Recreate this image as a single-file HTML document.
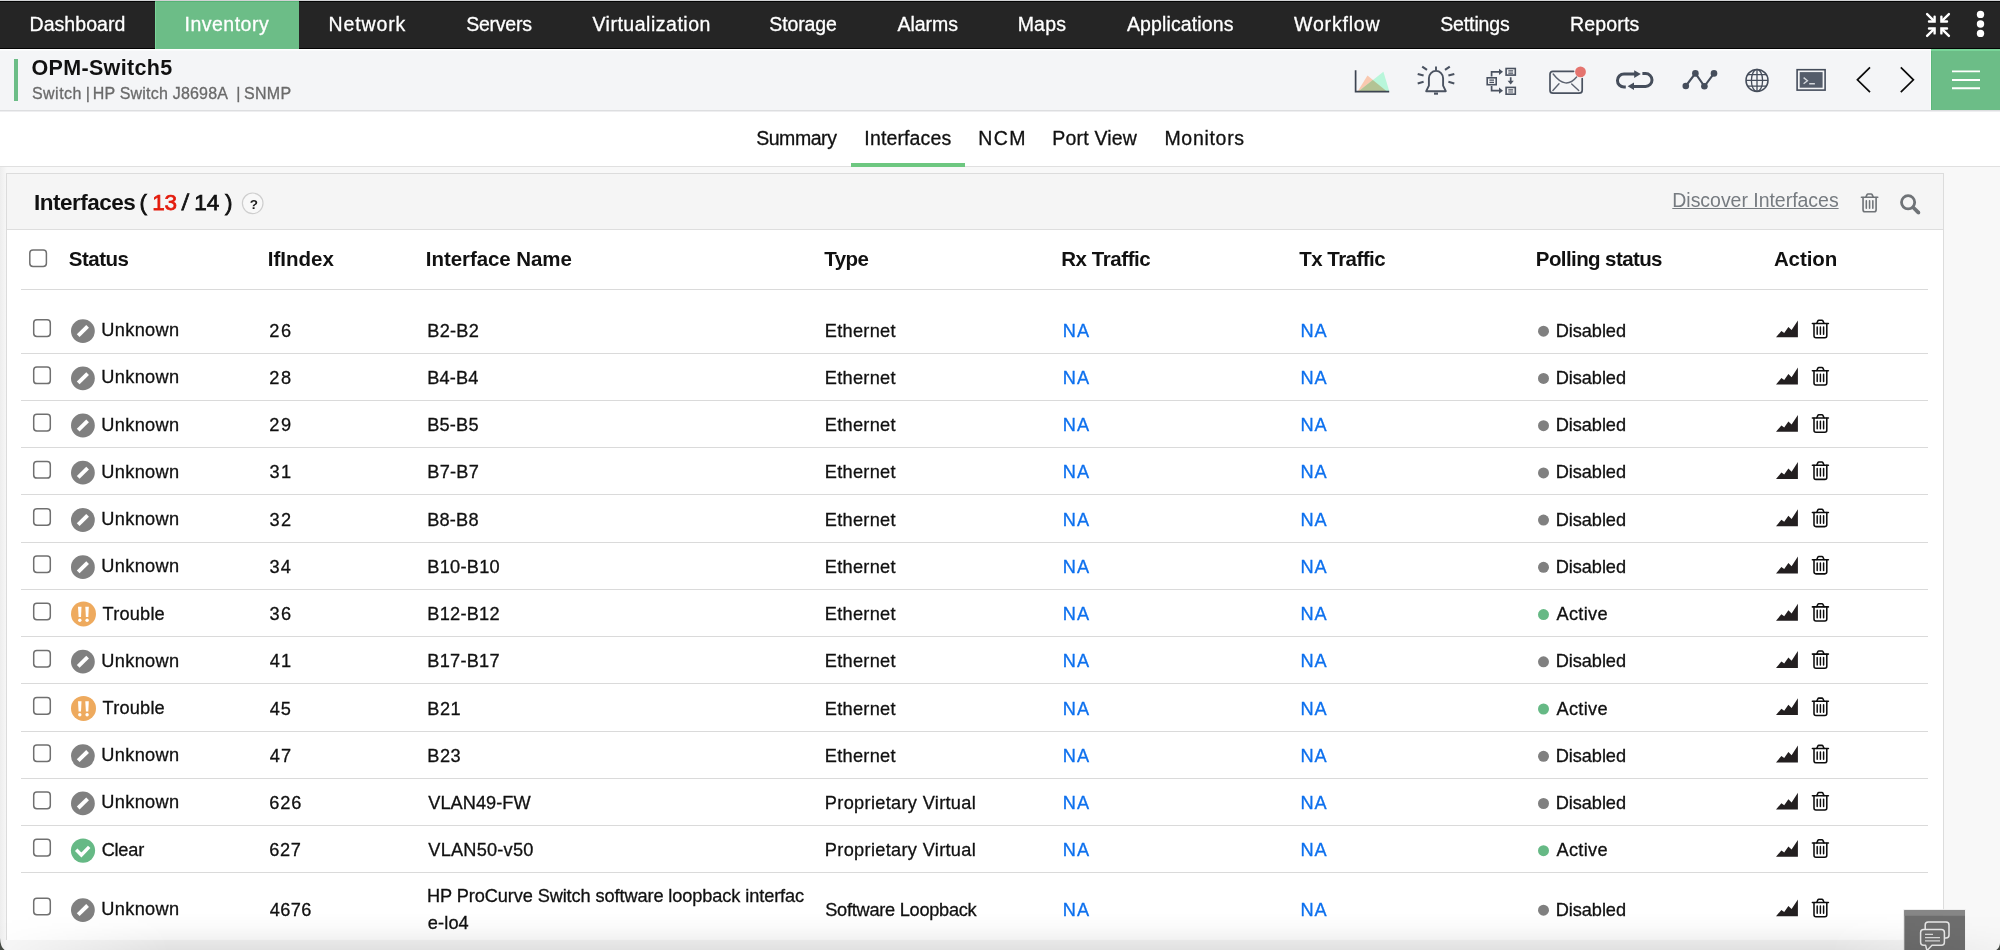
<!DOCTYPE html>
<html lang="en"><head><meta charset="utf-8"><title>OPM-Switch5 - Interfaces</title>
<style>
html,body{margin:0;padding:0}
body{width:2000px;height:950px;overflow:hidden;position:relative;background:#f8f8f8;font-family:"Liberation Sans", sans-serif;color:#111}
.a{position:absolute}
.t{position:absolute;white-space:pre;line-height:1}
.cb{position:absolute;width:15px;height:15px;border:1.5px solid #6f6f6f;border-radius:3.5px;background:#fff}
.sep{position:absolute;left:21px;width:1907px;height:1px;background:#dadada}
svg{position:absolute;overflow:visible}
</style></head><body>
<div class="a" style="left:0;top:0;width:2000px;height:49px;background:#252525"></div>
<div class="a" style="left:0;top:0;width:2000px;height:1px;background:#d2d3d5"></div>
<div class="a" style="left:0;top:1px;width:2000px;height:1px;background:#050505"></div>
<div class="a" style="left:0;top:48px;width:2000px;height:1px;background:#030303"></div>
<div class="a" style="left:155px;top:1px;width:144px;height:48px;background:#6cbd87"></div>
<div class="a" style="left:155px;top:1px;width:144px;height:1px;background:#56b376"></div>
<div class="a" style="left:155px;top:2px;width:1px;height:47px;background:#79d599"></div>
<div class="a" style="left:0;top:49px;width:2000px;height:61px;background:#f4f5f7"></div>
<div class="a" style="left:0;top:49px;width:1931px;height:1px;background:#fff"></div>
<div class="a" style="left:0;top:50px;width:1931px;height:1px;background:#f9fafb"></div>
<div class="a" style="left:0;top:110px;width:2000px;height:1px;background:#dddee0"></div>
<div class="a" style="left:0;top:111px;width:2000px;height:1px;background:#eeeef0"></div>
<div class="a" style="left:14px;top:59px;width:4px;height:42px;background:#6cbd87"></div>
<div class="a" style="left:1930px;top:49px;width:1px;height:61px;background:#fbfbfc"></div>
<div class="a" style="left:1931px;top:49px;width:69px;height:61px;background:#6cbd87"></div>
<div class="a" style="left:1931px;top:49px;width:69px;height:2px;background:#79d599"></div>
<div class="a" style="left:1931px;top:51px;width:1px;height:59px;background:#5cb77b"></div>
<div class="a" style="left:0;top:112px;width:2000px;height:54px;background:#fff"></div>
<div class="a" style="left:0;top:166px;width:2000px;height:1px;background:#e0e0e0"></div>
<div class="a" style="left:851px;top:163px;width:114px;height:4px;background:#6dc780"></div>
<div class="a" style="left:0;top:167px;width:7px;height:783px;background:linear-gradient(90deg,#ededed,#f8f8f8)"></div>
<div class="a" style="left:6px;top:173px;width:1936px;height:766px;background:#fff;border:1px solid #dcdcdc;border-bottom:none"></div>
<div class="a" style="left:7px;top:174px;width:1936px;height:55px;background:#f5f5f5"></div>
<div class="a" style="left:7px;top:229px;width:1936px;height:1px;background:#dedede"></div>
<div class="sep" style="top:289px"></div>
<div class="sep" style="top:353px"></div>
<div class="sep" style="top:400px"></div>
<div class="sep" style="top:447px"></div>
<div class="sep" style="top:494px"></div>
<div class="sep" style="top:542px"></div>
<div class="sep" style="top:589px"></div>
<div class="sep" style="top:636px"></div>
<div class="sep" style="top:683px"></div>
<div class="sep" style="top:731px"></div>
<div class="sep" style="top:778px"></div>
<div class="sep" style="top:825px"></div>
<div class="sep" style="top:872px"></div>
<svg style="left:0;top:0" width="2000" height="950" viewBox="0 0 2000 950"><g fill="#fff" stroke="#707070" stroke-width="1.5"><rect x="29.8" y="249.9" width="16.6" height="16.6" rx="3.2"/><rect x="33.7" y="319.8" width="16.6" height="16.6" rx="3.2"/><rect x="33.7" y="367.0" width="16.6" height="16.6" rx="3.2"/><rect x="33.7" y="414.3" width="16.6" height="16.6" rx="3.2"/><rect x="33.7" y="461.5" width="16.6" height="16.6" rx="3.2"/><rect x="33.7" y="508.7" width="16.6" height="16.6" rx="3.2"/><rect x="33.7" y="555.9" width="16.6" height="16.6" rx="3.2"/><rect x="33.7" y="603.2" width="16.6" height="16.6" rx="3.2"/><rect x="33.7" y="650.4" width="16.6" height="16.6" rx="3.2"/><rect x="33.7" y="697.6" width="16.6" height="16.6" rx="3.2"/><rect x="33.7" y="744.9" width="16.6" height="16.6" rx="3.2"/><rect x="33.7" y="792.1" width="16.6" height="16.6" rx="3.2"/><rect x="33.7" y="839.3" width="16.6" height="16.6" rx="3.2"/><rect x="33.7" y="898.2" width="16.6" height="16.6" rx="3.2"/></g></svg>
<svg style="left:0;top:0" width="2000" height="950" viewBox="0 0 2000 950" ><g stroke="#fff" stroke-width="2.4" fill="none" stroke-linecap="butt" stroke-linejoin="miter"><path d="M1927.1 14.1L1934.0 20.9" stroke-linecap="round"/><path d="M1929.0 21.5H1934.6V16.6" stroke-linecap="round"/><path d="M1948.9 14.1L1942.0 20.9" stroke-linecap="round"/><path d="M1947.0 21.5H1941.4V16.6" stroke-linecap="round"/><path d="M1927.1 35.9L1934.0 29.1" stroke-linecap="round"/><path d="M1929.0 28.5H1934.6V33.4" stroke-linecap="round"/><path d="M1948.9 35.9L1942.0 29.1" stroke-linecap="round"/><path d="M1947.0 28.5H1941.4V33.4" stroke-linecap="round"/></g><circle cx="1980.5" cy="14.4" r="3.7" fill="#fff"/><circle cx="1980.5" cy="24.0" r="3.7" fill="#fff"/><circle cx="1980.5" cy="33.4" r="3.7" fill="#fff"/><polygon points="1357.9,91 1367.5,75.5 1386.4,91" fill="#f9c9b0"/><polygon points="1359,91 1383.4,71.7 1389.2,91" fill="#b8f6da"/><polygon points="1359,91 1372.8,80 1386.4,91" fill="#b3c394"/><path d="M1355.6 70.2V91.6H1389.2" fill="none" stroke="#3c4451" stroke-width="1.7"/><g fill="none" stroke="#4a5260" stroke-width="1.9" stroke-linecap="butt" stroke-linejoin="round"><path d="M1436 66.6V70.4"/><path d="M1426.2 91.2L1428.9 85.6V78.2A7.1 7.3 0 0 1 1443.1 78.2V85.6L1445.8 91.2Z"/><path d="M1434 93.6H1438" stroke-width="2.2"/><path d="M1422.2 66.6L1427.0 69.9M1417.7 74L1423.6 75.6M1417.7 83.4L1423.6 81.8" stroke-width="2.1"/><path d="M1449.8 66.6L1445.0 69.9M1454.3 74L1448.4 75.6M1454.3 83.4L1448.4 81.8" stroke-width="2.1"/></g><g fill="none" stroke="#4a5260" stroke-width="1.6"><rect x="1487.2" y="77.8" width="9.0" height="6.9"/><path d="M1489.4 80.2H1494.0M1489.4 82.4H1494.0" stroke-width="1.2"/><rect x="1506.1" y="68.5" width="9.2" height="6.6"/><path d="M1508.3 70.9H1513.1M1508.3 73.1H1513.1" stroke-width="1.2"/><rect x="1506.1" y="87.4" width="9.2" height="6.8"/><path d="M1508.3 89.8H1513.1M1508.3 92.0H1513.1" stroke-width="1.2"/><path d="M1491.6 76.6V71.8H1499.6M1491.6 86V90.7H1499.6M1510.7 77.2V81.4" stroke-width="1.7"/></g><polygon points="1499,68.7 1503,71.8 1499,74.9" fill="#4a5260"/><polygon points="1499,87.6 1503,90.7 1499,93.8" fill="#4a5260"/><polygon points="1507.6,80.8 1513.8,80.8 1510.7,84.4" fill="#4a5260"/><g fill="none" stroke="#4a5260" stroke-width="1.7" stroke-linecap="round"><path d="M1573.6 71.3H1553Q1550 71.3 1550 74.3V90.2Q1550 93.2 1553 93.2H1579Q1582.2 93.2 1582.2 90.2V78.6"/><path d="M1553.2 74Q1565.6 90.2 1576.6 77" stroke-width="1.4" opacity=".9"/><path d="M1552.9 90.4L1559 83.8M1571.7 84L1578.7 90.6" stroke-width="1.4" opacity=".9"/></g><circle cx="1580.5" cy="71.9" r="5.4" fill="#e5746f"/><g fill="none" stroke="#454d5b" stroke-width="3"><path d="M1625.8 87.1H1624A6.55 6.55 0 0 1 1624 74H1635"/><path d="M1642.4 73.6H1645.6A6.4 6.4 0 0 1 1645.6 86.4H1633.4"/></g><polygon points="1634.2,70.2 1640.8,74.1 1634.2,78" fill="#454d5b"/><polygon points="1634,82.6 1627.6,86.3 1634,90" fill="#454d5b"/><path d="M1685.8 86L1695.4 73.4L1704.4 86.3L1714 73.4" fill="none" stroke="#454d5b" stroke-width="2.1"/><circle cx="1685.8" cy="86.0" r="3.3" fill="#454d5b"/><circle cx="1695.4" cy="73.4" r="3.3" fill="#454d5b"/><circle cx="1704.4" cy="86.3" r="3.3" fill="#454d5b"/><circle cx="1714.0" cy="73.4" r="3.3" fill="#454d5b"/><g fill="none" stroke="#454d5b" stroke-width="1.5"><circle cx="1757" cy="80.4" r="11"/><ellipse cx="1757" cy="80.4" rx="5.6" ry="11" stroke-width="1.3"/><path d="M1757 69.4V91.4M1746 80.4H1768M1748 74.6H1766M1748 86.2H1766" stroke-width="1.3"/></g><rect x="1797.1" y="69.7" width="28" height="20.4" fill="none" stroke="#454d5b" stroke-width="1.6"/><rect x="1799.7" y="72.1" width="22.9" height="15.6" fill="#545c6a"/><path d="M1803.6 77.6L1807.4 80.7L1803.6 83.7M1809.2 83.7H1814.9" fill="none" stroke="#d3d6db" stroke-width="1.4"/><path d="M1870 67.4L1857.4 79.8L1870 92.2M1900.8 67.4L1913.4 79.8L1900.8 92.2" fill="none" stroke="#0a0a0a" stroke-width="1.7"/><path d="M1952 71.4H1980M1952 80H1980M1952 88.3H1980" fill="none" stroke="#fff" stroke-width="1.9"/><circle cx="252.7" cy="203.3" r="10.3" fill="#f8f8f8" stroke="#cecece" stroke-width="1.2"/><g transform="translate(1860.60 193.20) scale(1.020)" fill="none" stroke="#6f7377" stroke-width="1.60" stroke-linecap="round" stroke-linejoin="round"><path d="M0.8 4H16.8"/><path d="M5.2 3.8L6.3 1.4Q6.6 0.8 7.3 0.8H10.3Q11 0.8 11.3 1.4L12.4 3.8"/><path d="M2.4 4.2V16.2Q2.4 18.2 4.4 18.2H13.2Q15.2 18.2 15.2 16.2V4.2"/><path d="M5.6 7.4V14.8M8.8 7.4V14.8M12 7.4V14.8" stroke-width="1.52"/></g><circle cx="1908.1" cy="202.3" r="6.6" fill="none" stroke="#6f7377" stroke-width="2.8"/><path d="M1913 207.2L1918.7 212.9" fill="none" stroke="#6f7377" stroke-width="3.7" stroke-linecap="butt"/><circle cx="1918.6" cy="212.8" r="1.7" fill="#6f7377"/><rect x="1903.8" y="909.7" width="61.7" height="42" fill="#6e6e6e" stroke="#f4f4f4" stroke-width="1"/><rect x="1904.3" y="910.2" width="60.7" height="5.6" fill="#868686"/><g fill="none" stroke="#e9e9e9" stroke-width="1.5" stroke-linejoin="round"><path d="M1925.2 929V925Q1925.2 922 1928.2 922H1946Q1949 922 1949 925V935Q1949 938 1946 938H1945"/><path d="M1923.6 929.6H1941.4Q1944.4 929.6 1944.4 932.6V942.2Q1944.4 945.2 1941.4 945.2H1932L1927 950.6L1925.6 945.2H1923.6Q1920.6 945.2 1920.6 942.2V932.6Q1920.6 929.6 1923.6 929.6Z" fill="#6e6e6e"/><path d="M1925 934.4H1933M1925 937.6H1940M1925 940.8H1940" stroke-width="1.3" stroke="#dcdcdc"/></g></svg>
<svg style="left:0;top:0" width="2000" height="950" viewBox="0 0 2000 950" ><circle cx="82.9" cy="331.1" r="11.9" fill="#808080"/><path d="M78.2 335.7L87.6 326.4" stroke="#fff" stroke-width="3.9" stroke-linecap="butt" fill="none"/><circle cx="1543.5" cy="331.2" r="5.5" fill="#808080"/><polygon points="1776,337.3 1781.4,330.9 1784.2,332.9 1788.4,326.9 1791.6,330.1 1797.9,320.4 1797.9,337.3" fill="#231f20"/><g transform="translate(1811.60 319.50) scale(1.000)" fill="none" stroke="#0d0d0d" stroke-width="1.55" stroke-linecap="round" stroke-linejoin="round"><path d="M0.8 4H16.8"/><path d="M5.2 3.8L6.3 1.4Q6.6 0.8 7.3 0.8H10.3Q11 0.8 11.3 1.4L12.4 3.8"/><path d="M2.4 4.2V16.2Q2.4 18.2 4.4 18.2H13.2Q15.2 18.2 15.2 16.2V4.2"/><path d="M5.6 7.4V14.8M8.8 7.4V14.8M12 7.4V14.8" stroke-width="1.47"/></g></svg>
<svg style="left:0;top:0" width="2000" height="950" viewBox="0 0 2000 950" ><circle cx="82.9" cy="378.3" r="11.9" fill="#808080"/><path d="M78.2 382.9L87.6 373.7" stroke="#fff" stroke-width="3.9" stroke-linecap="butt" fill="none"/><circle cx="1543.5" cy="378.4" r="5.5" fill="#808080"/><polygon points="1776,384.5 1781.4,378.1 1784.2,380.1 1788.4,374.1 1791.6,377.3 1797.9,367.6 1797.9,384.5" fill="#231f20"/><g transform="translate(1811.60 366.73) scale(1.000)" fill="none" stroke="#0d0d0d" stroke-width="1.55" stroke-linecap="round" stroke-linejoin="round"><path d="M0.8 4H16.8"/><path d="M5.2 3.8L6.3 1.4Q6.6 0.8 7.3 0.8H10.3Q11 0.8 11.3 1.4L12.4 3.8"/><path d="M2.4 4.2V16.2Q2.4 18.2 4.4 18.2H13.2Q15.2 18.2 15.2 16.2V4.2"/><path d="M5.6 7.4V14.8M8.8 7.4V14.8M12 7.4V14.8" stroke-width="1.47"/></g></svg>
<svg style="left:0;top:0" width="2000" height="950" viewBox="0 0 2000 950" ><circle cx="82.9" cy="425.5" r="11.9" fill="#808080"/><path d="M78.2 430.1L87.6 420.9" stroke="#fff" stroke-width="3.9" stroke-linecap="butt" fill="none"/><circle cx="1543.5" cy="425.7" r="5.5" fill="#808080"/><polygon points="1776,431.8 1781.4,425.4 1784.2,427.4 1788.4,421.4 1791.6,424.6 1797.9,414.9 1797.9,431.8" fill="#231f20"/><g transform="translate(1811.60 413.96) scale(1.000)" fill="none" stroke="#0d0d0d" stroke-width="1.55" stroke-linecap="round" stroke-linejoin="round"><path d="M0.8 4H16.8"/><path d="M5.2 3.8L6.3 1.4Q6.6 0.8 7.3 0.8H10.3Q11 0.8 11.3 1.4L12.4 3.8"/><path d="M2.4 4.2V16.2Q2.4 18.2 4.4 18.2H13.2Q15.2 18.2 15.2 16.2V4.2"/><path d="M5.6 7.4V14.8M8.8 7.4V14.8M12 7.4V14.8" stroke-width="1.47"/></g></svg>
<svg style="left:0;top:0" width="2000" height="950" viewBox="0 0 2000 950" ><circle cx="82.9" cy="472.7" r="11.9" fill="#808080"/><path d="M78.2 477.3L87.6 468.1" stroke="#fff" stroke-width="3.9" stroke-linecap="butt" fill="none"/><circle cx="1543.5" cy="472.9" r="5.5" fill="#808080"/><polygon points="1776,479.0 1781.4,472.6 1784.2,474.6 1788.4,468.6 1791.6,471.8 1797.9,462.1 1797.9,479.0" fill="#231f20"/><g transform="translate(1811.60 461.19) scale(1.000)" fill="none" stroke="#0d0d0d" stroke-width="1.55" stroke-linecap="round" stroke-linejoin="round"><path d="M0.8 4H16.8"/><path d="M5.2 3.8L6.3 1.4Q6.6 0.8 7.3 0.8H10.3Q11 0.8 11.3 1.4L12.4 3.8"/><path d="M2.4 4.2V16.2Q2.4 18.2 4.4 18.2H13.2Q15.2 18.2 15.2 16.2V4.2"/><path d="M5.6 7.4V14.8M8.8 7.4V14.8M12 7.4V14.8" stroke-width="1.47"/></g></svg>
<svg style="left:0;top:0" width="2000" height="950" viewBox="0 0 2000 950" ><circle cx="82.9" cy="520.0" r="11.9" fill="#808080"/><path d="M78.2 524.6L87.6 515.4" stroke="#fff" stroke-width="3.9" stroke-linecap="butt" fill="none"/><circle cx="1543.5" cy="520.1" r="5.5" fill="#808080"/><polygon points="1776,526.2 1781.4,519.8 1784.2,521.8 1788.4,515.8 1791.6,519.0 1797.9,509.3 1797.9,526.2" fill="#231f20"/><g transform="translate(1811.60 508.42) scale(1.000)" fill="none" stroke="#0d0d0d" stroke-width="1.55" stroke-linecap="round" stroke-linejoin="round"><path d="M0.8 4H16.8"/><path d="M5.2 3.8L6.3 1.4Q6.6 0.8 7.3 0.8H10.3Q11 0.8 11.3 1.4L12.4 3.8"/><path d="M2.4 4.2V16.2Q2.4 18.2 4.4 18.2H13.2Q15.2 18.2 15.2 16.2V4.2"/><path d="M5.6 7.4V14.8M8.8 7.4V14.8M12 7.4V14.8" stroke-width="1.47"/></g></svg>
<svg style="left:0;top:0" width="2000" height="950" viewBox="0 0 2000 950" ><circle cx="82.9" cy="567.2" r="11.9" fill="#808080"/><path d="M78.2 571.8L87.6 562.6" stroke="#fff" stroke-width="3.9" stroke-linecap="butt" fill="none"/><circle cx="1543.5" cy="567.3" r="5.5" fill="#808080"/><polygon points="1776,573.4 1781.4,567.0 1784.2,569.0 1788.4,563.0 1791.6,566.2 1797.9,556.5 1797.9,573.4" fill="#231f20"/><g transform="translate(1811.60 555.65) scale(1.000)" fill="none" stroke="#0d0d0d" stroke-width="1.55" stroke-linecap="round" stroke-linejoin="round"><path d="M0.8 4H16.8"/><path d="M5.2 3.8L6.3 1.4Q6.6 0.8 7.3 0.8H10.3Q11 0.8 11.3 1.4L12.4 3.8"/><path d="M2.4 4.2V16.2Q2.4 18.2 4.4 18.2H13.2Q15.2 18.2 15.2 16.2V4.2"/><path d="M5.6 7.4V14.8M8.8 7.4V14.8M12 7.4V14.8" stroke-width="1.47"/></g></svg>
<svg style="left:0;top:0" width="2000" height="950" viewBox="0 0 2000 950" ><circle cx="83.5" cy="613.9" r="12.5" fill="#eeaa5e"/><path d="M78.0 606.7H81.5L81.0 616.9H78.6Z" fill="#fff"/><circle cx="79.8" cy="620.3" r="1.7" fill="#fff"/><path d="M85.3 606.7H88.8L88.3 616.9H85.9Z" fill="#fff"/><circle cx="87.1" cy="620.3" r="1.7" fill="#fff"/><circle cx="1543.5" cy="614.6" r="5.5" fill="#66b985"/><polygon points="1776,620.7 1781.4,614.3 1784.2,616.3 1788.4,610.3 1791.6,613.5 1797.9,603.8 1797.9,620.7" fill="#231f20"/><g transform="translate(1811.60 602.88) scale(1.000)" fill="none" stroke="#0d0d0d" stroke-width="1.55" stroke-linecap="round" stroke-linejoin="round"><path d="M0.8 4H16.8"/><path d="M5.2 3.8L6.3 1.4Q6.6 0.8 7.3 0.8H10.3Q11 0.8 11.3 1.4L12.4 3.8"/><path d="M2.4 4.2V16.2Q2.4 18.2 4.4 18.2H13.2Q15.2 18.2 15.2 16.2V4.2"/><path d="M5.6 7.4V14.8M8.8 7.4V14.8M12 7.4V14.8" stroke-width="1.47"/></g></svg>
<svg style="left:0;top:0" width="2000" height="950" viewBox="0 0 2000 950" ><circle cx="82.9" cy="661.7" r="11.9" fill="#808080"/><path d="M78.2 666.3L87.6 657.1" stroke="#fff" stroke-width="3.9" stroke-linecap="butt" fill="none"/><circle cx="1543.5" cy="661.8" r="5.5" fill="#808080"/><polygon points="1776,667.9 1781.4,661.5 1784.2,663.5 1788.4,657.5 1791.6,660.7 1797.9,651.0 1797.9,667.9" fill="#231f20"/><g transform="translate(1811.60 650.11) scale(1.000)" fill="none" stroke="#0d0d0d" stroke-width="1.55" stroke-linecap="round" stroke-linejoin="round"><path d="M0.8 4H16.8"/><path d="M5.2 3.8L6.3 1.4Q6.6 0.8 7.3 0.8H10.3Q11 0.8 11.3 1.4L12.4 3.8"/><path d="M2.4 4.2V16.2Q2.4 18.2 4.4 18.2H13.2Q15.2 18.2 15.2 16.2V4.2"/><path d="M5.6 7.4V14.8M8.8 7.4V14.8M12 7.4V14.8" stroke-width="1.47"/></g></svg>
<svg style="left:0;top:0" width="2000" height="950" viewBox="0 0 2000 950" ><circle cx="83.5" cy="708.4" r="12.5" fill="#eeaa5e"/><path d="M78.0 701.2H81.5L81.0 711.4H78.6Z" fill="#fff"/><circle cx="79.8" cy="714.8" r="1.7" fill="#fff"/><path d="M85.3 701.2H88.8L88.3 711.4H85.9Z" fill="#fff"/><circle cx="87.1" cy="714.8" r="1.7" fill="#fff"/><circle cx="1543.5" cy="709.0" r="5.5" fill="#66b985"/><polygon points="1776,715.1 1781.4,708.7 1784.2,710.7 1788.4,704.7 1791.6,707.9 1797.9,698.2 1797.9,715.1" fill="#231f20"/><g transform="translate(1811.60 697.34) scale(1.000)" fill="none" stroke="#0d0d0d" stroke-width="1.55" stroke-linecap="round" stroke-linejoin="round"><path d="M0.8 4H16.8"/><path d="M5.2 3.8L6.3 1.4Q6.6 0.8 7.3 0.8H10.3Q11 0.8 11.3 1.4L12.4 3.8"/><path d="M2.4 4.2V16.2Q2.4 18.2 4.4 18.2H13.2Q15.2 18.2 15.2 16.2V4.2"/><path d="M5.6 7.4V14.8M8.8 7.4V14.8M12 7.4V14.8" stroke-width="1.47"/></g></svg>
<svg style="left:0;top:0" width="2000" height="950" viewBox="0 0 2000 950" ><circle cx="82.9" cy="756.1" r="11.9" fill="#808080"/><path d="M78.2 760.7L87.6 751.5" stroke="#fff" stroke-width="3.9" stroke-linecap="butt" fill="none"/><circle cx="1543.5" cy="756.3" r="5.5" fill="#808080"/><polygon points="1776,762.4 1781.4,756.0 1784.2,758.0 1788.4,752.0 1791.6,755.2 1797.9,745.5 1797.9,762.4" fill="#231f20"/><g transform="translate(1811.60 744.57) scale(1.000)" fill="none" stroke="#0d0d0d" stroke-width="1.55" stroke-linecap="round" stroke-linejoin="round"><path d="M0.8 4H16.8"/><path d="M5.2 3.8L6.3 1.4Q6.6 0.8 7.3 0.8H10.3Q11 0.8 11.3 1.4L12.4 3.8"/><path d="M2.4 4.2V16.2Q2.4 18.2 4.4 18.2H13.2Q15.2 18.2 15.2 16.2V4.2"/><path d="M5.6 7.4V14.8M8.8 7.4V14.8M12 7.4V14.8" stroke-width="1.47"/></g></svg>
<svg style="left:0;top:0" width="2000" height="950" viewBox="0 0 2000 950" ><circle cx="82.9" cy="803.4" r="11.9" fill="#808080"/><path d="M78.2 808.0L87.6 798.8" stroke="#fff" stroke-width="3.9" stroke-linecap="butt" fill="none"/><circle cx="1543.5" cy="803.5" r="5.5" fill="#808080"/><polygon points="1776,809.6 1781.4,803.2 1784.2,805.2 1788.4,799.2 1791.6,802.4 1797.9,792.7 1797.9,809.6" fill="#231f20"/><g transform="translate(1811.60 791.80) scale(1.000)" fill="none" stroke="#0d0d0d" stroke-width="1.55" stroke-linecap="round" stroke-linejoin="round"><path d="M0.8 4H16.8"/><path d="M5.2 3.8L6.3 1.4Q6.6 0.8 7.3 0.8H10.3Q11 0.8 11.3 1.4L12.4 3.8"/><path d="M2.4 4.2V16.2Q2.4 18.2 4.4 18.2H13.2Q15.2 18.2 15.2 16.2V4.2"/><path d="M5.6 7.4V14.8M8.8 7.4V14.8M12 7.4V14.8" stroke-width="1.47"/></g></svg>
<svg style="left:0;top:0" width="2000" height="950" viewBox="0 0 2000 950" ><circle cx="83" cy="850.6" r="12.1" fill="#66b985"/><path d="M76.2 849.8L81.4 855.0L89.2 846.9" stroke="#fff" stroke-width="3.4" fill="none"/><circle cx="1543.5" cy="850.7" r="5.5" fill="#66b985"/><polygon points="1776,856.8 1781.4,850.4 1784.2,852.4 1788.4,846.4 1791.6,849.6 1797.9,839.9 1797.9,856.8" fill="#231f20"/><g transform="translate(1811.60 839.03) scale(1.000)" fill="none" stroke="#0d0d0d" stroke-width="1.55" stroke-linecap="round" stroke-linejoin="round"><path d="M0.8 4H16.8"/><path d="M5.2 3.8L6.3 1.4Q6.6 0.8 7.3 0.8H10.3Q11 0.8 11.3 1.4L12.4 3.8"/><path d="M2.4 4.2V16.2Q2.4 18.2 4.4 18.2H13.2Q15.2 18.2 15.2 16.2V4.2"/><path d="M5.6 7.4V14.8M8.8 7.4V14.8M12 7.4V14.8" stroke-width="1.47"/></g></svg>
<svg style="left:0;top:0" width="2000" height="950" viewBox="0 0 2000 950" ><circle cx="82.9" cy="910.1" r="11.9" fill="#808080"/><path d="M78.2 914.7L87.6 905.5" stroke="#fff" stroke-width="3.9" stroke-linecap="butt" fill="none"/><circle cx="1543.5" cy="910.2" r="5.5" fill="#808080"/><polygon points="1776,916.3 1781.4,909.9 1784.2,911.9 1788.4,905.9 1791.6,909.1 1797.9,899.4 1797.9,916.3" fill="#231f20"/><g transform="translate(1811.60 898.50) scale(1.000)" fill="none" stroke="#0d0d0d" stroke-width="1.55" stroke-linecap="round" stroke-linejoin="round"><path d="M0.8 4H16.8"/><path d="M5.2 3.8L6.3 1.4Q6.6 0.8 7.3 0.8H10.3Q11 0.8 11.3 1.4L12.4 3.8"/><path d="M2.4 4.2V16.2Q2.4 18.2 4.4 18.2H13.2Q15.2 18.2 15.2 16.2V4.2"/><path d="M5.6 7.4V14.8M8.8 7.4V14.8M12 7.4V14.8" stroke-width="1.47"/></g></svg>
<div id="txt" style="position:absolute;left:0;top:0;width:2000px;height:950px;will-change:transform">
<span class="t" style="left:29.50px;top:15.00px;font-size:19.5px;font-weight:400;color:#fff;letter-spacing:0.062px;-webkit-text-stroke:0.3px currentColor;">Dashboard</span>
<span class="t" style="left:184.50px;top:15.00px;font-size:19.5px;font-weight:400;color:#fff;letter-spacing:0.500px;-webkit-text-stroke:0.3px currentColor;">Inventory</span>
<span class="t" style="left:328.50px;top:15.00px;font-size:19.5px;font-weight:400;color:#fff;letter-spacing:0.875px;-webkit-text-stroke:0.3px currentColor;">Network</span>
<span class="t" style="left:466.25px;top:15.00px;font-size:19.5px;font-weight:400;color:#fff;letter-spacing:-0.250px;-webkit-text-stroke:0.3px currentColor;">Servers</span>
<span class="t" style="left:592.40px;top:15.00px;font-size:19.5px;font-weight:400;color:#fff;letter-spacing:0.519px;-webkit-text-stroke:0.3px currentColor;">Virtualization</span>
<span class="t" style="left:769.25px;top:15.00px;font-size:19.5px;font-weight:400;color:#fff;letter-spacing:-0.125px;-webkit-text-stroke:0.3px currentColor;">Storage</span>
<span class="t" style="left:897.50px;top:15.00px;font-size:19.5px;font-weight:400;color:#fff;letter-spacing:-0.050px;-webkit-text-stroke:0.3px currentColor;">Alarms</span>
<span class="t" style="left:1017.70px;top:15.00px;font-size:19.5px;font-weight:400;color:#fff;letter-spacing:0.183px;-webkit-text-stroke:0.3px currentColor;">Maps</span>
<span class="t" style="left:1127.00px;top:15.00px;font-size:19.5px;font-weight:400;color:#fff;letter-spacing:0.118px;-webkit-text-stroke:0.3px currentColor;">Applications</span>
<span class="t" style="left:1294.00px;top:15.00px;font-size:19.5px;font-weight:400;color:#fff;letter-spacing:0.829px;-webkit-text-stroke:0.3px currentColor;">Workflow</span>
<span class="t" style="left:1440.25px;top:15.00px;font-size:19.5px;font-weight:400;color:#fff;letter-spacing:-0.136px;-webkit-text-stroke:0.3px currentColor;">Settings</span>
<span class="t" style="left:1570.10px;top:15.00px;font-size:19.5px;font-weight:400;color:#fff;letter-spacing:0.158px;-webkit-text-stroke:0.3px currentColor;">Reports</span>
<span class="t" style="left:31.40px;top:58.00px;font-size:21.5px;font-weight:700;color:#111;letter-spacing:0.345px;">OPM-Switch5</span>
<span class="t" style="left:31.90px;top:86.00px;font-size:16px;font-weight:400;color:#6a6a6a;letter-spacing:0.490px;-webkit-text-stroke:0.3px currentColor;">Switch</span>
<span class="t" style="left:85.65px;top:86.00px;font-size:16px;font-weight:400;color:#6a6a6a;-webkit-text-stroke:0.3px currentColor;">|</span>
<span class="t" style="left:92.75px;top:86.00px;font-size:16px;font-weight:400;color:#6a6a6a;letter-spacing:0.200px;-webkit-text-stroke:0.3px currentColor;">HP Switch J8698A</span>
<span class="t" style="left:236.15px;top:86.00px;font-size:16px;font-weight:400;color:#6a6a6a;-webkit-text-stroke:0.3px currentColor;">|</span>
<span class="t" style="left:243.90px;top:86.00px;font-size:16px;font-weight:400;color:#6a6a6a;letter-spacing:0.333px;-webkit-text-stroke:0.3px currentColor;">SNMP</span>
<span class="t" style="left:756.15px;top:129.00px;font-size:19.5px;font-weight:400;color:#111;letter-spacing:-0.442px;-webkit-text-stroke:0.3px currentColor;">Summary</span>
<span class="t" style="left:864.35px;top:129.00px;font-size:19.5px;font-weight:400;color:#111;letter-spacing:0.139px;-webkit-text-stroke:0.3px currentColor;">Interfaces</span>
<span class="t" style="left:978.20px;top:129.00px;font-size:19.5px;font-weight:400;color:#111;letter-spacing:1.500px;-webkit-text-stroke:0.3px currentColor;">NCM</span>
<span class="t" style="left:1052.30px;top:129.00px;font-size:19.5px;font-weight:400;color:#111;letter-spacing:0.181px;-webkit-text-stroke:0.3px currentColor;">Port View</span>
<span class="t" style="left:1164.40px;top:129.00px;font-size:19.5px;font-weight:400;color:#111;letter-spacing:0.707px;-webkit-text-stroke:0.3px currentColor;">Monitors</span>
<span class="t" style="left:34.10px;top:192.00px;font-size:22.5px;font-weight:700;color:#111;letter-spacing:-0.511px;">Interfaces</span>
<span class="t" style="left:139.40px;top:192.00px;font-size:22.5px;font-weight:400;color:#111;-webkit-text-stroke:0.75px currentColor;">(</span>
<span class="t" style="left:152.15px;top:192.00px;font-size:22.5px;font-weight:400;color:#e31b0c;letter-spacing:-0.250px;-webkit-text-stroke:0.75px currentColor;">13</span>
<span class="t" style="left:181.80px;top:192.00px;font-size:22.5px;font-weight:400;color:#111;-webkit-text-stroke:0.75px currentColor;transform:skewX(-5deg);">/</span>
<span class="t" style="left:194.35px;top:192.00px;font-size:22.5px;font-weight:400;color:#111;letter-spacing:-0.100px;-webkit-text-stroke:0.75px currentColor;">14</span>
<span class="t" style="left:224.90px;top:192.00px;font-size:22.5px;font-weight:400;color:#111;-webkit-text-stroke:0.75px currentColor;">)</span>
<span class="t" style="left:249.85px;top:198.00px;font-size:13.5px;font-weight:700;color:#1a1a1a;">?</span>
<span class="t" style="left:1672.30px;top:191.00px;font-size:19.5px;font-weight:400;color:#767b80;letter-spacing:-0.031px;text-decoration:underline;text-decoration-thickness:1.4px;text-underline-offset:1.5px-webkit-text-stroke:0.3px currentColor;">Discover Interfaces</span>
<span class="t" style="left:68.75px;top:249.00px;font-size:20.5px;font-weight:700;color:#111;letter-spacing:-0.500px;">Status</span>
<span class="t" style="left:267.75px;top:249.00px;font-size:20.5px;font-weight:700;color:#111;">IfIndex</span>
<span class="t" style="left:425.85px;top:249.00px;font-size:20.5px;font-weight:700;color:#111;letter-spacing:-0.077px;">Interface Name</span>
<span class="t" style="left:824.35px;top:249.00px;font-size:20.5px;font-weight:700;color:#111;letter-spacing:-0.567px;">Type</span>
<span class="t" style="left:1061.25px;top:249.00px;font-size:20.5px;font-weight:700;color:#111;letter-spacing:-0.433px;">Rx Traffic</span>
<span class="t" style="left:1299.25px;top:249.00px;font-size:20.5px;font-weight:700;color:#111;letter-spacing:-0.528px;">Tx Traffic</span>
<span class="t" style="left:1535.85px;top:249.00px;font-size:20.5px;font-weight:700;color:#111;letter-spacing:-0.596px;">Polling status</span>
<span class="t" style="left:1773.90px;top:249.00px;font-size:20.5px;font-weight:700;color:#111;letter-spacing:-0.080px;">Action</span>
<span class="t" style="left:101.35px;top:321.00px;font-size:18.2px;font-weight:400;color:#111;letter-spacing:0.317px;-webkit-text-stroke:0.3px currentColor;">Unknown</span>
<span class="t" style="left:269.25px;top:322.00px;font-size:18.2px;font-weight:400;color:#111;letter-spacing:1.550px;-webkit-text-stroke:0.3px currentColor;">26</span>
<span class="t" style="left:427.25px;top:322.00px;font-size:18.2px;font-weight:400;color:#111;letter-spacing:0.250px;-webkit-text-stroke:0.3px currentColor;">B2-B2</span>
<span class="t" style="left:824.75px;top:322.00px;font-size:18.2px;font-weight:400;color:#111;letter-spacing:0.286px;-webkit-text-stroke:0.3px currentColor;">Ethernet</span>
<span class="t" style="left:1062.75px;top:322.00px;font-size:18.2px;font-weight:400;color:#0d70ee;letter-spacing:1.000px;-webkit-text-stroke:0.3px currentColor;">NA</span>
<span class="t" style="left:1300.55px;top:322.00px;font-size:18.2px;font-weight:400;color:#0d70ee;letter-spacing:0.800px;-webkit-text-stroke:0.3px currentColor;">NA</span>
<span class="t" style="left:1555.75px;top:322.00px;font-size:18.2px;font-weight:400;color:#111;letter-spacing:-0.071px;-webkit-text-stroke:0.3px currentColor;">Disabled</span>
<span class="t" style="left:101.35px;top:368.00px;font-size:18.2px;font-weight:400;color:#111;letter-spacing:0.317px;-webkit-text-stroke:0.3px currentColor;">Unknown</span>
<span class="t" style="left:269.25px;top:369.00px;font-size:18.2px;font-weight:400;color:#111;letter-spacing:1.550px;-webkit-text-stroke:0.3px currentColor;">28</span>
<span class="t" style="left:427.25px;top:369.00px;font-size:18.2px;font-weight:400;color:#111;letter-spacing:0.125px;-webkit-text-stroke:0.3px currentColor;">B4-B4</span>
<span class="t" style="left:824.75px;top:369.00px;font-size:18.2px;font-weight:400;color:#111;letter-spacing:0.286px;-webkit-text-stroke:0.3px currentColor;">Ethernet</span>
<span class="t" style="left:1062.75px;top:369.00px;font-size:18.2px;font-weight:400;color:#0d70ee;letter-spacing:1.000px;-webkit-text-stroke:0.3px currentColor;">NA</span>
<span class="t" style="left:1300.55px;top:369.00px;font-size:18.2px;font-weight:400;color:#0d70ee;letter-spacing:0.800px;-webkit-text-stroke:0.3px currentColor;">NA</span>
<span class="t" style="left:1555.75px;top:369.00px;font-size:18.2px;font-weight:400;color:#111;letter-spacing:-0.071px;-webkit-text-stroke:0.3px currentColor;">Disabled</span>
<span class="t" style="left:101.35px;top:416.00px;font-size:18.2px;font-weight:400;color:#111;letter-spacing:0.317px;-webkit-text-stroke:0.3px currentColor;">Unknown</span>
<span class="t" style="left:269.25px;top:416.00px;font-size:18.2px;font-weight:400;color:#111;letter-spacing:1.550px;-webkit-text-stroke:0.3px currentColor;">29</span>
<span class="t" style="left:427.25px;top:416.00px;font-size:18.2px;font-weight:400;color:#111;letter-spacing:0.188px;-webkit-text-stroke:0.3px currentColor;">B5-B5</span>
<span class="t" style="left:824.75px;top:416.00px;font-size:18.2px;font-weight:400;color:#111;letter-spacing:0.286px;-webkit-text-stroke:0.3px currentColor;">Ethernet</span>
<span class="t" style="left:1062.75px;top:416.00px;font-size:18.2px;font-weight:400;color:#0d70ee;letter-spacing:1.000px;-webkit-text-stroke:0.3px currentColor;">NA</span>
<span class="t" style="left:1300.55px;top:416.00px;font-size:18.2px;font-weight:400;color:#0d70ee;letter-spacing:0.800px;-webkit-text-stroke:0.3px currentColor;">NA</span>
<span class="t" style="left:1555.75px;top:416.00px;font-size:18.2px;font-weight:400;color:#111;letter-spacing:-0.071px;-webkit-text-stroke:0.3px currentColor;">Disabled</span>
<span class="t" style="left:101.35px;top:463.00px;font-size:18.2px;font-weight:400;color:#111;letter-spacing:0.317px;-webkit-text-stroke:0.3px currentColor;">Unknown</span>
<span class="t" style="left:269.50px;top:463.00px;font-size:18.2px;font-weight:400;color:#111;letter-spacing:1.300px;-webkit-text-stroke:0.3px currentColor;">31</span>
<span class="t" style="left:427.25px;top:463.00px;font-size:18.2px;font-weight:400;color:#111;letter-spacing:0.250px;-webkit-text-stroke:0.3px currentColor;">B7-B7</span>
<span class="t" style="left:824.75px;top:463.00px;font-size:18.2px;font-weight:400;color:#111;letter-spacing:0.286px;-webkit-text-stroke:0.3px currentColor;">Ethernet</span>
<span class="t" style="left:1062.75px;top:463.00px;font-size:18.2px;font-weight:400;color:#0d70ee;letter-spacing:1.000px;-webkit-text-stroke:0.3px currentColor;">NA</span>
<span class="t" style="left:1300.55px;top:463.00px;font-size:18.2px;font-weight:400;color:#0d70ee;letter-spacing:0.800px;-webkit-text-stroke:0.3px currentColor;">NA</span>
<span class="t" style="left:1555.75px;top:463.00px;font-size:18.2px;font-weight:400;color:#111;letter-spacing:-0.071px;-webkit-text-stroke:0.3px currentColor;">Disabled</span>
<span class="t" style="left:101.35px;top:510.00px;font-size:18.2px;font-weight:400;color:#111;letter-spacing:0.317px;-webkit-text-stroke:0.3px currentColor;">Unknown</span>
<span class="t" style="left:269.50px;top:511.00px;font-size:18.2px;font-weight:400;color:#111;letter-spacing:1.300px;-webkit-text-stroke:0.3px currentColor;">32</span>
<span class="t" style="left:427.25px;top:511.00px;font-size:18.2px;font-weight:400;color:#111;letter-spacing:0.188px;-webkit-text-stroke:0.3px currentColor;">B8-B8</span>
<span class="t" style="left:824.75px;top:511.00px;font-size:18.2px;font-weight:400;color:#111;letter-spacing:0.286px;-webkit-text-stroke:0.3px currentColor;">Ethernet</span>
<span class="t" style="left:1062.75px;top:511.00px;font-size:18.2px;font-weight:400;color:#0d70ee;letter-spacing:1.000px;-webkit-text-stroke:0.3px currentColor;">NA</span>
<span class="t" style="left:1300.55px;top:511.00px;font-size:18.2px;font-weight:400;color:#0d70ee;letter-spacing:0.800px;-webkit-text-stroke:0.3px currentColor;">NA</span>
<span class="t" style="left:1555.75px;top:511.00px;font-size:18.2px;font-weight:400;color:#111;letter-spacing:-0.071px;-webkit-text-stroke:0.3px currentColor;">Disabled</span>
<span class="t" style="left:101.35px;top:557.00px;font-size:18.2px;font-weight:400;color:#111;letter-spacing:0.317px;-webkit-text-stroke:0.3px currentColor;">Unknown</span>
<span class="t" style="left:269.50px;top:558.00px;font-size:18.2px;font-weight:400;color:#111;letter-spacing:1.050px;-webkit-text-stroke:0.3px currentColor;">34</span>
<span class="t" style="left:427.35px;top:558.00px;font-size:18.2px;font-weight:400;color:#111;letter-spacing:0.267px;-webkit-text-stroke:0.3px currentColor;">B10-B10</span>
<span class="t" style="left:824.75px;top:558.00px;font-size:18.2px;font-weight:400;color:#111;letter-spacing:0.286px;-webkit-text-stroke:0.3px currentColor;">Ethernet</span>
<span class="t" style="left:1062.75px;top:558.00px;font-size:18.2px;font-weight:400;color:#0d70ee;letter-spacing:1.000px;-webkit-text-stroke:0.3px currentColor;">NA</span>
<span class="t" style="left:1300.55px;top:558.00px;font-size:18.2px;font-weight:400;color:#0d70ee;letter-spacing:0.800px;-webkit-text-stroke:0.3px currentColor;">NA</span>
<span class="t" style="left:1555.75px;top:558.00px;font-size:18.2px;font-weight:400;color:#111;letter-spacing:-0.071px;-webkit-text-stroke:0.3px currentColor;">Disabled</span>
<span class="t" style="left:102.55px;top:605.00px;font-size:18.2px;font-weight:400;color:#111;letter-spacing:0.200px;-webkit-text-stroke:0.3px currentColor;">Trouble</span>
<span class="t" style="left:269.50px;top:605.00px;font-size:18.2px;font-weight:400;color:#111;letter-spacing:1.300px;-webkit-text-stroke:0.3px currentColor;">36</span>
<span class="t" style="left:427.35px;top:605.00px;font-size:18.2px;font-weight:400;color:#111;letter-spacing:0.242px;-webkit-text-stroke:0.3px currentColor;">B12-B12</span>
<span class="t" style="left:824.75px;top:605.00px;font-size:18.2px;font-weight:400;color:#111;letter-spacing:0.286px;-webkit-text-stroke:0.3px currentColor;">Ethernet</span>
<span class="t" style="left:1062.75px;top:605.00px;font-size:18.2px;font-weight:400;color:#0d70ee;letter-spacing:1.000px;-webkit-text-stroke:0.3px currentColor;">NA</span>
<span class="t" style="left:1300.55px;top:605.00px;font-size:18.2px;font-weight:400;color:#0d70ee;letter-spacing:0.800px;-webkit-text-stroke:0.3px currentColor;">NA</span>
<span class="t" style="left:1556.50px;top:605.00px;font-size:18.2px;font-weight:400;color:#111;letter-spacing:0.300px;-webkit-text-stroke:0.3px currentColor;">Active</span>
<span class="t" style="left:101.35px;top:652.00px;font-size:18.2px;font-weight:400;color:#111;letter-spacing:0.317px;-webkit-text-stroke:0.3px currentColor;">Unknown</span>
<span class="t" style="left:269.75px;top:652.00px;font-size:18.2px;font-weight:400;color:#111;letter-spacing:1.050px;-webkit-text-stroke:0.3px currentColor;">41</span>
<span class="t" style="left:427.35px;top:652.00px;font-size:18.2px;font-weight:400;color:#111;letter-spacing:0.242px;-webkit-text-stroke:0.3px currentColor;">B17-B17</span>
<span class="t" style="left:824.75px;top:652.00px;font-size:18.2px;font-weight:400;color:#111;letter-spacing:0.286px;-webkit-text-stroke:0.3px currentColor;">Ethernet</span>
<span class="t" style="left:1062.75px;top:652.00px;font-size:18.2px;font-weight:400;color:#0d70ee;letter-spacing:1.000px;-webkit-text-stroke:0.3px currentColor;">NA</span>
<span class="t" style="left:1300.55px;top:652.00px;font-size:18.2px;font-weight:400;color:#0d70ee;letter-spacing:0.800px;-webkit-text-stroke:0.3px currentColor;">NA</span>
<span class="t" style="left:1555.75px;top:652.00px;font-size:18.2px;font-weight:400;color:#111;letter-spacing:-0.071px;-webkit-text-stroke:0.3px currentColor;">Disabled</span>
<span class="t" style="left:102.55px;top:699.00px;font-size:18.2px;font-weight:400;color:#111;letter-spacing:0.200px;-webkit-text-stroke:0.3px currentColor;">Trouble</span>
<span class="t" style="left:269.75px;top:700.00px;font-size:18.2px;font-weight:400;color:#111;letter-spacing:0.800px;-webkit-text-stroke:0.3px currentColor;">45</span>
<span class="t" style="left:427.35px;top:700.00px;font-size:18.2px;font-weight:400;color:#111;letter-spacing:0.450px;-webkit-text-stroke:0.3px currentColor;">B21</span>
<span class="t" style="left:824.75px;top:700.00px;font-size:18.2px;font-weight:400;color:#111;letter-spacing:0.286px;-webkit-text-stroke:0.3px currentColor;">Ethernet</span>
<span class="t" style="left:1062.75px;top:700.00px;font-size:18.2px;font-weight:400;color:#0d70ee;letter-spacing:1.000px;-webkit-text-stroke:0.3px currentColor;">NA</span>
<span class="t" style="left:1300.55px;top:700.00px;font-size:18.2px;font-weight:400;color:#0d70ee;letter-spacing:0.800px;-webkit-text-stroke:0.3px currentColor;">NA</span>
<span class="t" style="left:1556.50px;top:700.00px;font-size:18.2px;font-weight:400;color:#111;letter-spacing:0.300px;-webkit-text-stroke:0.3px currentColor;">Active</span>
<span class="t" style="left:101.35px;top:746.00px;font-size:18.2px;font-weight:400;color:#111;letter-spacing:0.317px;-webkit-text-stroke:0.3px currentColor;">Unknown</span>
<span class="t" style="left:269.75px;top:747.00px;font-size:18.2px;font-weight:400;color:#111;letter-spacing:1.050px;-webkit-text-stroke:0.3px currentColor;">47</span>
<span class="t" style="left:427.35px;top:747.00px;font-size:18.2px;font-weight:400;color:#111;letter-spacing:0.450px;-webkit-text-stroke:0.3px currentColor;">B23</span>
<span class="t" style="left:824.75px;top:747.00px;font-size:18.2px;font-weight:400;color:#111;letter-spacing:0.286px;-webkit-text-stroke:0.3px currentColor;">Ethernet</span>
<span class="t" style="left:1062.75px;top:747.00px;font-size:18.2px;font-weight:400;color:#0d70ee;letter-spacing:1.000px;-webkit-text-stroke:0.3px currentColor;">NA</span>
<span class="t" style="left:1300.55px;top:747.00px;font-size:18.2px;font-weight:400;color:#0d70ee;letter-spacing:0.800px;-webkit-text-stroke:0.3px currentColor;">NA</span>
<span class="t" style="left:1555.75px;top:747.00px;font-size:18.2px;font-weight:400;color:#111;letter-spacing:-0.071px;-webkit-text-stroke:0.3px currentColor;">Disabled</span>
<span class="t" style="left:101.35px;top:793.00px;font-size:18.2px;font-weight:400;color:#111;letter-spacing:0.317px;-webkit-text-stroke:0.3px currentColor;">Unknown</span>
<span class="t" style="left:269.25px;top:794.00px;font-size:18.2px;font-weight:400;color:#111;letter-spacing:0.850px;-webkit-text-stroke:0.3px currentColor;">626</span>
<span class="t" style="left:428.30px;top:794.00px;font-size:18.2px;font-weight:400;color:#111;letter-spacing:0.031px;-webkit-text-stroke:0.3px currentColor;">VLAN49-FW</span>
<span class="t" style="left:824.85px;top:794.00px;font-size:18.2px;font-weight:400;color:#111;letter-spacing:0.317px;-webkit-text-stroke:0.3px currentColor;">Proprietary Virtual</span>
<span class="t" style="left:1062.75px;top:794.00px;font-size:18.2px;font-weight:400;color:#0d70ee;letter-spacing:1.000px;-webkit-text-stroke:0.3px currentColor;">NA</span>
<span class="t" style="left:1300.55px;top:794.00px;font-size:18.2px;font-weight:400;color:#0d70ee;letter-spacing:0.800px;-webkit-text-stroke:0.3px currentColor;">NA</span>
<span class="t" style="left:1555.75px;top:794.00px;font-size:18.2px;font-weight:400;color:#111;letter-spacing:-0.071px;-webkit-text-stroke:0.3px currentColor;">Disabled</span>
<span class="t" style="left:101.65px;top:841.00px;font-size:18.2px;font-weight:400;color:#111;letter-spacing:-0.225px;-webkit-text-stroke:0.3px currentColor;">Clear</span>
<span class="t" style="left:269.25px;top:841.00px;font-size:18.2px;font-weight:400;color:#111;letter-spacing:0.625px;-webkit-text-stroke:0.3px currentColor;">627</span>
<span class="t" style="left:428.30px;top:841.00px;font-size:18.2px;font-weight:400;color:#111;letter-spacing:0.211px;-webkit-text-stroke:0.3px currentColor;">VLAN50-v50</span>
<span class="t" style="left:824.85px;top:841.00px;font-size:18.2px;font-weight:400;color:#111;letter-spacing:0.317px;-webkit-text-stroke:0.3px currentColor;">Proprietary Virtual</span>
<span class="t" style="left:1062.75px;top:841.00px;font-size:18.2px;font-weight:400;color:#0d70ee;letter-spacing:1.000px;-webkit-text-stroke:0.3px currentColor;">NA</span>
<span class="t" style="left:1300.55px;top:841.00px;font-size:18.2px;font-weight:400;color:#0d70ee;letter-spacing:0.800px;-webkit-text-stroke:0.3px currentColor;">NA</span>
<span class="t" style="left:1556.50px;top:841.00px;font-size:18.2px;font-weight:400;color:#111;letter-spacing:0.300px;-webkit-text-stroke:0.3px currentColor;">Active</span>
<span class="t" style="left:101.35px;top:900.00px;font-size:18.2px;font-weight:400;color:#111;letter-spacing:0.317px;-webkit-text-stroke:0.3px currentColor;">Unknown</span>
<span class="t" style="left:269.75px;top:901.00px;font-size:18.2px;font-weight:400;color:#111;letter-spacing:0.400px;-webkit-text-stroke:0.3px currentColor;">4676</span>
<span class="t" style="left:427.05px;top:887.00px;font-size:18.2px;font-weight:400;color:#111;letter-spacing:-0.106px;-webkit-text-stroke:0.3px currentColor;">HP ProCurve Switch software loopback interfac</span>
<span class="t" style="left:427.80px;top:914.00px;font-size:18.2px;font-weight:400;color:#111;letter-spacing:0.125px;-webkit-text-stroke:0.3px currentColor;">e-lo4</span>
<span class="t" style="left:825.25px;top:901.00px;font-size:18.2px;font-weight:400;color:#111;letter-spacing:-0.266px;-webkit-text-stroke:0.3px currentColor;">Software Loopback</span>
<span class="t" style="left:1062.75px;top:901.00px;font-size:18.2px;font-weight:400;color:#0d70ee;letter-spacing:1.000px;-webkit-text-stroke:0.3px currentColor;">NA</span>
<span class="t" style="left:1300.55px;top:901.00px;font-size:18.2px;font-weight:400;color:#0d70ee;letter-spacing:0.800px;-webkit-text-stroke:0.3px currentColor;">NA</span>
<span class="t" style="left:1555.75px;top:901.00px;font-size:18.2px;font-weight:400;color:#111;letter-spacing:-0.071px;-webkit-text-stroke:0.3px currentColor;">Disabled</span>
</div>
<div class="a" style="left:0;top:912px;width:2000px;height:38px;background:linear-gradient(180deg,rgba(0,0,0,0) 0,rgba(0,0,0,0.02) 40%,rgba(0,0,0,0.05) 72%,rgba(0,0,0,0.062) 74%,rgba(0,0,0,0.09) 100%);-webkit-mask-image:linear-gradient(90deg,rgba(0,0,0,0.1) 0,#000 170px,#000 1830px,rgba(0,0,0,0.25) 100%);mask-image:linear-gradient(90deg,rgba(0,0,0,0.1) 0,#000 170px,#000 1830px,rgba(0,0,0,0.25) 100%)"></div>
<svg style="left:0;top:0" width="2000" height="950" viewBox="0 0 2000 950"><path d="M0 938Q0.4 947 4.6 950H0Z" fill="#454a44"/><path d="M2000 943Q1999.6 948 1996.2 950H2000Z" fill="#454a44"/></svg>
</body></html>
